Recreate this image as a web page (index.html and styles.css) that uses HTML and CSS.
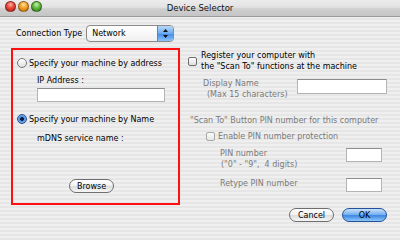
FILE: index.html
```html
<!DOCTYPE html>
<html lang="en">
<head>
    <meta charset="UTF-8">
    <title>Device Selector</title>
    <link rel="stylesheet" href="styles.css">
</head>
<body>
    <div class="window">
        <!-- Title bar -->
        <div class="titlebar">
            <div class="lights">
                <span class="light red"></span>
                <span class="light orange"></span>
                <span class="light green"></span>
            </div>
            <div class="title">Device Selector</div>
            <div></div>
        </div>

        <div class="content">
            <div class="conn-row">
                <span>Connection Type</span>
                <div class="popup">
                    <span>Network</span>
                    <span class="popup-arrows">
                        <svg width="7" height="11" viewBox="0 0 7 11"><path d="M3.5 1 L6 4 L1 4 Z M3.5 10 L6 7 L1 7 Z" fill="#111"/></svg>
                    </span>
                </div>
            </div>

            <div class="columns">
                <!-- Left: machine selection -->
                <div class="select-box">
                    <label class="radio-row">
                        <span class="radio"></span>
                        <span>Specify your machine by address</span>
                    </label>
                    <div class="field-label">IP Address :</div>
                    <div class="textfield ip-field"></div>
                    <label class="radio-row second">
                        <span class="radio on"></span>
                        <span>Specify your machine by Name</span>
                    </label>
                    <div class="field-label mdns">mDNS service name :</div>
                    <div class="browse-wrap">
                        <button class="pill">Browse</button>
                    </div>
                </div>

                <!-- Right: Scan To registration -->
                <div class="scan-col">
                    <label class="check-row">
                        <span class="check"></span>
                        <span>Register your computer with<br>the "Scan To" functions at the machine</span>
                    </label>
                    <div class="display-row">
                        <div class="dim">Display Name<br><span class="sub">(Max 15 characters)</span></div>
                        <div class="textfield display-field"></div>
                    </div>
                    <div class="dim pin-head">"Scan To" Button PIN number for this computer</div>
                    <label class="check-row dim enable-row">
                        <span class="check small"></span>
                        <span>Enable PIN number protection</span>
                    </label>
                    <div class="pin-row">
                        <div class="dim">PIN number<br><span class="sub-pin">("0" - "9",&nbsp; 4 digits)</span></div>
                        <div class="textfield pin-field"></div>
                    </div>
                    <div class="pin-row retype">
                        <div class="dim">Retype PIN number</div>
                        <div class="textfield pin-field"></div>
                    </div>
                </div>
            </div>

            <div class="buttons">
                <button class="pill">Cancel</button>
                <button class="pill default">OK</button>
            </div>
        </div>
    </div>
</body>
</html>
```

FILE: styles.css
```css
body {
    margin: 0;
    font-family: 'DejaVu Sans', sans-serif;
    font-size: 8px;
    line-height: 11px;
    color: #000000;
}

.window {
    width: 400px;
    height: 240px;
    overflow: hidden;
    background: repeating-linear-gradient(to bottom, #efefef 0, #efefef 2px, #e6e6e6 2px, #e6e6e6 4px);
}

/* Title bar */
.titlebar {
    height: 16px;
    display: grid;
    grid-template-columns: 1fr auto 1fr;
    align-items: center;
    background: linear-gradient(to bottom, #ececec 0%, #e2e2e2 45%, #cfcfcf 55%, #c4c4c4 100%);
    border-bottom: 1px solid #9a9a9a;
}

.lights {
    display: flex;
    gap: 2px;
    padding-left: 5px;
    margin-top: -4px;
}

.light {
    width: 11px;
    height: 11px;
    border-radius: 50%;
    box-sizing: border-box;
    border: 1px solid rgba(0, 0, 0, 0.35);
}

.light.red {
    background: radial-gradient(circle at 50% 30%, #ffb0a8 0, #e8463c 45%, #b01c14 100%);
}

.light.orange {
    background: radial-gradient(circle at 50% 30%, #ffe0a0 0, #f2a02a 45%, #c06a08 100%);
}

.light.green {
    background: radial-gradient(circle at 50% 30%, #c8f0b0 0, #62b83e 45%, #2a7a14 100%);
}

.title {
    font-size: 8.5px;
    color: #111111;
}

/* Main area */
.content {
    padding: 8px 13px 0 11px;
}

.conn-row {
    display: flex;
    align-items: center;
    gap: 4px;
    padding-left: 5px;
    height: 17px;
}

.popup {
    width: 88px;
    height: 17px;
    box-sizing: border-box;
    display: flex;
    align-items: center;
    justify-content: space-between;
    border: 1px solid #8a8a8a;
    border-radius: 4px;
    background: linear-gradient(to bottom, #ffffff, #f0f0f0);
    padding-left: 5px;
    overflow: hidden;
}

.popup-arrows {
    width: 15px;
    height: 100%;
    display: flex;
    align-items: center;
    justify-content: center;
    background: linear-gradient(to bottom, #b8d8f8 0%, #6aaaf0 50%, #3f88e6 51%, #8cc4f8 100%);
    border-left: 1px solid #5a84c0;
}

.columns {
    display: flex;
    margin-top: 6px;
    gap: 8px;
}

/* Red-framed left box */
.select-box {
    width: 169px;
    height: 157px;
    box-sizing: border-box;
    border: 2px solid #ff1010;
    padding: 7px 0 10px 4px;
    display: flex;
    flex-direction: column;
}

.radio-row {
    display: flex;
    align-items: center;
    gap: 2px;
    height: 12px;
}

.radio-row.second {
    margin-top: 11px;
}

.radio {
    width: 10px;
    height: 10px;
    box-sizing: border-box;
    border-radius: 50%;
    border: 1px solid #777777;
    background: linear-gradient(to bottom, #ffffff, #e0e0e0);
}

.radio.on {
    border-color: #2a4f8a;
    background: radial-gradient(circle, #102040 0, #102040 1.6px, #4a90e8 2.2px, #9cc8f4 100%);
}

.field-label {
    margin: 6px 0 0 20px;
    line-height: 12px;
}

.field-label.mdns {
    margin-top: 8px;
}

.textfield {
    height: 14px;
    box-sizing: border-box;
    background: #ffffff;
    border: 1px solid #b4b4b4;
    border-top-color: #8c8c8c;
}

.ip-field {
    width: 128px;
    margin: 1px 0 0 20px;
}

.browse-wrap {
    margin-top: auto;
    padding-left: 52px;
}

/* Aqua pill buttons */
.pill {
    font-family: 'DejaVu Sans', sans-serif;
    font-size: 8px;
    width: 45px;
    height: 14px;
    padding: 0;
    border: 1px solid #6e6e6e;
    border-radius: 7px;
    background: linear-gradient(to bottom, #ffffff 0%, #f0f0f0 50%, #dcdcdc 51%, #f6f6f6 100%);
    color: #000000;
}

.pill.default {
    border-color: #24509a;
    background: linear-gradient(to bottom, #c6e0fa 0%, #7ab4f0 45%, #3d86e2 55%, #8cc8fa 100%);
}

/* Right column */
.scan-col {
    flex: 1;
    display: flex;
    flex-direction: column;
    padding-top: 2px;
}

.check-row {
    display: flex;
    align-items: center;
    gap: 4px;
}

.check {
    width: 9px;
    height: 9px;
    box-sizing: border-box;
    border: 1px solid #6e6e6e;
    border-radius: 2px;
    background: linear-gradient(to bottom, #ffffff, #dedede);
    flex-shrink: 0;
}

.check.small {
    border-color: #a8a8a8;
    background: linear-gradient(to bottom, #fafafa, #e6e6e6);
}

.dim {
    color: #7a7a7a;
}

.display-row {
    display: flex;
    justify-content: space-between;
    margin-top: 6px;
    padding-left: 15px;
}

.sub {
    padding-left: 4px;
}

.display-field {
    width: 90px;
    height: 15px;
    margin-top: 1px;
}

.pin-head {
    margin: 15px 0 0 2px;
}

.enable-row {
    margin: 5px 0 0 18px;
    gap: 3px;
}

.pin-row {
    display: flex;
    justify-content: space-between;
    margin-top: 6px;
    padding: 0 5px 0 32px;
}

.sub-pin {
    padding-left: 1px;
}

.pin-field {
    width: 36px;
}

.pin-row.retype {
    margin-top: 8px;
}

.buttons {
    display: flex;
    justify-content: flex-end;
    gap: 8px;
    margin-top: 3px;
}
```
